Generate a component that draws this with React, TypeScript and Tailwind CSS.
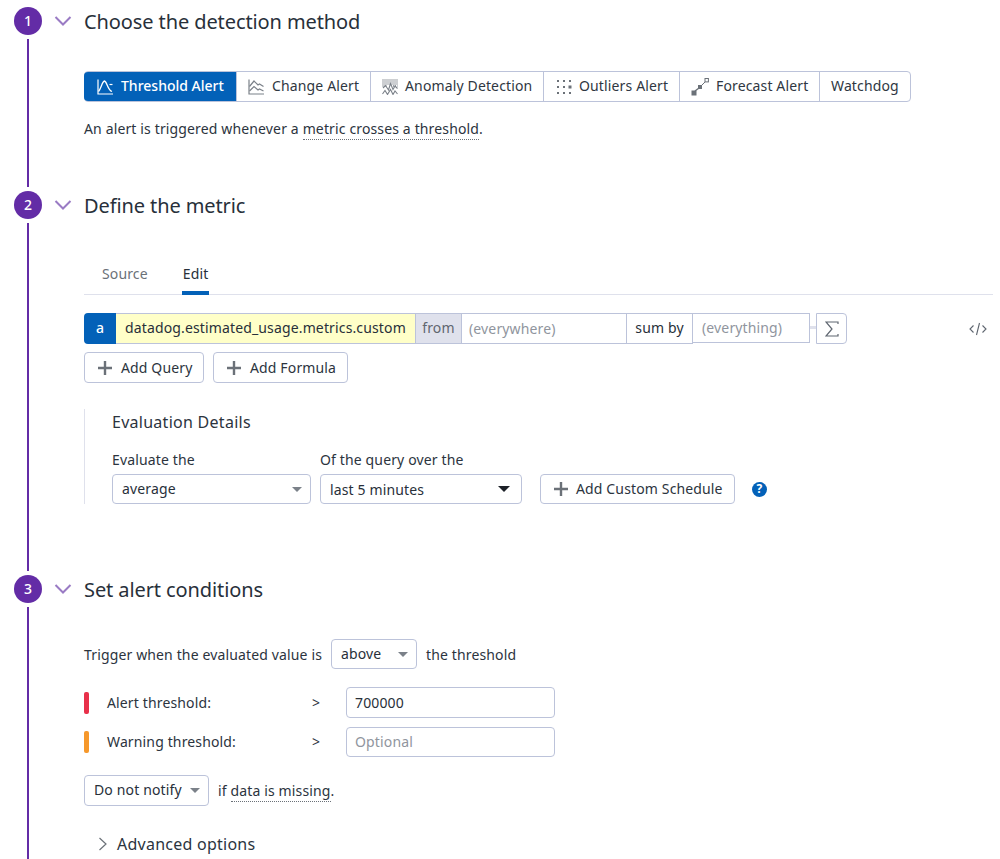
import React from "react";

const F = "font-['Noto_Sans',sans-serif]";

function Chevron() {
  return (
    <svg width="18" height="10" viewBox="0 0 18 10" className="shrink-0">
      <path d="M1.5 1 L9 8.5 L16.5 1" fill="none" stroke="#9a7bc4" strokeWidth="2" />
    </svg>
  );
}

function Caret({ color = "#7b8189", w = 10, h = 5 }: { color?: string; w?: number; h?: number }) {
  return (
    <svg width={w} height={h} viewBox="0 0 12 6" preserveAspectRatio="none" className="shrink-0">
      <path d="M0 0 H12 L6 6 Z" fill={color} />
    </svg>
  );
}

function Plus() {
  return (
    <svg width="16" height="16" viewBox="0 0 16 16" className="shrink-0">
      <path d="M8 1 V15 M1 8 H15" stroke="#6b7178" strokeWidth="2.4" fill="none" />
    </svg>
  );
}

function ThresholdIcon({ c }: { c: string }) {
  return (
    <svg width="16" height="16" viewBox="0 0 16 16" className="shrink-0">
      <path d="M1 0.5 V15 H16" stroke={c} strokeWidth="1.2" fill="none" />
      <path d="M1.5 12.5 C4 10 5 2.5 7.5 2 C10 2.5 10.5 11 15 12.5" stroke={c} strokeWidth="1.3" fill="none" />
      <path d="M12.5 5.5 H15.5" stroke={c} strokeWidth="1.2" fill="none" />
    </svg>
  );
}

function ChangeIcon({ c }: { c: string }) {
  return (
    <svg width="16" height="16" viewBox="0 0 16 16" className="shrink-0">
      <path d="M1 0.5 V15 H16" stroke={c} strokeWidth="1.2" fill="none" />
      <path d="M1.5 7.5 L6 2 L10 6 L11.5 5 L15.5 7.5" stroke={c} strokeWidth="1.2" fill="none" />
      <path d="M1.5 12 L6 7.5 L10 11 L11.5 10 L15.5 12" stroke={c} strokeWidth="1.2" fill="none" />
    </svg>
  );
}

function AnomalyIcon({ c }: { c: string }) {
  return (
    <svg width="16" height="16" viewBox="0 0 16 16" className="shrink-0">
      <path d="M0.5 1 H15.5 M0.5 3 H15.5 M0.5 5 H15.5 M0.5 7 H5 M11 7 H15.5" stroke={c} strokeWidth="1.3" strokeDasharray="1 1" fill="none" />
      <path d="M1 9 L3.5 6.5 L6.5 11 L8.5 4.5 L11 10.5 L13 7 L15.5 9.5" stroke={c} strokeWidth="1.1" fill="none" />
      <path d="M0.5 15 L3 11.5 L5.5 15.5 L8.5 10.5 L11 15.5 L13 12 L15.5 15" stroke={c} strokeWidth="1.1" fill="none" />
    </svg>
  );
}

function OutliersIcon({ c }: { c: string }) {
  const cells = [
    [1, 1],
    [7, 1],
    [13, 1],
    [1, 7],
    [7, 7],
    [1, 13],
    [7, 13],
    [13, 13],
  ];
  return (
    <svg width="16" height="16" viewBox="0 0 16 16" className="shrink-0">
      {cells.map(([x, y]) => (
        <rect key={`${x}-${y}`} x={x} y={y} width="2" height="2" fill={c} />
      ))}
      <rect x="12.5" y="6.5" width="3" height="3" fill={c} />
    </svg>
  );
}

function ForecastIcon({ c }: { c: string }) {
  return (
    <svg width="18" height="18" viewBox="0 0 18 18" className="shrink-0">
      <rect x="0.5" y="12.5" width="5" height="5" fill={c} />
      <rect x="7" y="7" width="4" height="4" fill={c} />
      <path d="M4 13 L8 10" stroke={c} strokeWidth="1.4" />
      <path d="M10 8 L14 4" stroke={c} strokeWidth="1" />
      <rect x="14" y="0.5" width="3.4" height="3.4" fill="none" stroke={c} strokeWidth="1" />
    </svg>
  );
}

function Step({
  n,
  title,
  last,
  heightClass,
  children,
}: {
  n: number;
  title: string;
  last?: boolean;
  heightClass: string;
  children: React.ReactNode;
}) {
  return (
    <section className={`flex ${heightClass}`}>
      <div className={`flex w-[28px] shrink-0 flex-col items-center ${last ? "" : "pb-[4px]"}`}>
        <div className="flex h-[28px] w-[28px] shrink-0 items-center justify-center rounded-full bg-[#632ca6] pb-[1px] text-[14px] font-medium text-white">
          {n}
        </div>
        <div className="mt-[4px] w-[2px] flex-1 bg-[#632ca6]" />
      </div>
      <div className="min-w-0 flex-1">
        <div className="flex h-[28px] items-center">
          <div className="ml-[12px] w-[30px]">
            <Chevron />
          </div>
          <h2 className="pt-[2px] text-[20px] leading-[28px] font-normal tracking-[-0.1px] text-[#28303a]">{title}</h2>
        </div>
        {children}
      </div>
    </section>
  );
}

function ModeButton({
  active,
  icon,
  label,
  className = "",
}: {
  active?: boolean;
  icon?: React.ReactNode;
  label: string;
  className?: string;
}) {
  return (
    <div
      className={`flex h-full items-center ${
        active
          ? "rounded-l-[4px] bg-[#0361b8] font-medium tracking-normal text-white"
          : "border-l border-[#bcc3da] text-[#2f3742]"
      } ${className}`}
    >
      {icon}
      <span className="pb-[2px]">{label}</span>
    </div>
  );
}

function Select({
  label,
  className = "",
  caret,
  textClass = "",
  dark,
}: {
  label: string;
  className?: string;
  caret?: string;
  textClass?: string;
  dark?: boolean;
}) {
  return (
    <div
      className={`flex items-center justify-between rounded-[4px] border border-[#bcc3da] bg-white text-[14px] text-[#28303a] ${className}`}
    >
      <span className={textClass}>{label}</span>
      {dark ? <Caret color="#1c2128" w={12} h={6} /> : <Caret color={caret} />}
    </div>
  );
}

export default function App() {
  return (
    <div className={`${F} h-[859px] overflow-hidden bg-white pt-[7px] pr-[7px] pl-[14px] text-[14px] tracking-[0.14px] text-[#2c343e]`}>
      <Step n={1} title="Choose the detection method" heightClass="h-[184px]">
        <div className="mt-[36px] ml-[42px] flex h-[31px] w-[827px] items-center rounded-[4px] border border-[#bcc3da] text-[14px]">
          <ModeButton active className="-my-px -ml-px h-[31px] w-[152px] shrink-0 gap-[8px] pl-[13px]" icon={<ThresholdIcon c="#ffffff" />} label="Threshold Alert" />
          <ModeButton className="w-[134px] gap-[8px] pl-[11px]" icon={<ChangeIcon c="#7b8189" />} label="Change Alert" />
          <ModeButton className="w-[173px] gap-[7px] pl-[11px]" icon={<AnomalyIcon c="#7b8189" />} label="Anomaly Detection" />
          <ModeButton className="w-[136px] gap-[7px] pl-[12px]" icon={<OutliersIcon c="#6b7178" />} label="Outliers Alert" />
          <ModeButton className="w-[140px] gap-[7px] pl-[11px]" icon={<ForecastIcon c="#6b7178" />} label="Forecast Alert" />
          <ModeButton className="flex-1 pl-[11px]" label="Watchdog" />
        </div>
        <p className="mt-[17px] ml-[42px] leading-[20px]">
          An alert is triggered whenever a{" "}
          <span className="border-b border-dotted border-[#6b7178] pb-[1px]">metric crosses a threshold</span>.
        </p>
      </Step>

      <Step n={2} title="Define the metric" heightClass="h-[384px]">
        <div className="mt-[27px] ml-[42px] flex h-[49px] gap-[34px] border-b border-[#dfe1ec] pl-[18px]">
          <div className="pt-[18px] leading-[20px] text-[#6b7178]">Source</div>
          <div className="h-[49px] w-[27px] border-b-[4px] border-[#0361b8] pt-[18px] pl-[1px] leading-[20px] text-[#28303a]">
            Edit
          </div>
        </div>

        <div className="mt-[18px] ml-[42px] flex h-[31px] items-start">
          <div className="flex h-[31px] w-[32px] items-center justify-center rounded-l-[4px] bg-[#0361b8] pb-[2px] font-medium text-white">
            a
          </div>
          <div className="flex h-[31px] w-[300px] items-center border-y border-r border-[#bcc3da] bg-[#ffffc8] pb-[2px] pl-[9px] text-[#28303a]">
            datadog.estimated_usage.metrics.custom
          </div>
          <div className="flex h-[31px] w-[46px] items-center justify-center border-y border-r border-[#bcc3da] bg-[#dfe1ec] pb-[2px] text-[#5f6670]">
            from
          </div>
          <div className="flex h-[31px] w-[164px] items-center border-y border-[#bcc3da] pl-[7px] text-[#90959e]">
            (everywhere)
          </div>
          <div className="flex h-[31px] w-[67px] items-center justify-center border border-[#bcc3da] pb-[2px] text-[#28303a]">
            sum by
          </div>
          <div className="flex h-[30px] w-[117px] items-center border-y border-r border-[#bcc3da] pb-[1px] pl-[9px] text-[#90959e]">
            (everything)
          </div>
          <div className="mt-[13px] h-[3px] w-[6px] bg-[#dfe1ec]" />
          <div className="flex h-[31px] w-[31px] items-center justify-center rounded-r-[4px] border border-[#bcc3da]">
            <svg width="14" height="16" viewBox="0 0 14 16">
              <path d="M13 3 V1 H1 L7 8 L1 15 H13 V13" fill="none" stroke="#5f6670" strokeWidth="1.2" />
            </svg>
          </div>
          <div className="ml-auto flex h-[31px] items-center pr-[6px]">
            <svg width="18" height="14" viewBox="0 0 18 14">
              <path d="M4.5 3.5 L1 7 L4.5 10.5 M13.5 3.5 L17 7 L13.5 10.5 M10.5 1 L7.5 13" fill="none" stroke="#5f6670" strokeWidth="1.1" />
            </svg>
          </div>
        </div>

        <div className="mt-[8px] ml-[42px] flex gap-[9px]">
          <div className="flex h-[31px] w-[120px] items-center gap-[8px] rounded-[4px] border border-[#bcc3da] pl-[12px]">
            <Plus />
            <span>Add Query</span>
          </div>
          <div className="flex h-[31px] w-[135px] items-center gap-[8px] rounded-[4px] border border-[#bcc3da] pl-[12px]">
            <Plus />
            <span>Add Formula</span>
          </div>
        </div>

        <div className="mt-[26px] ml-[42px] h-[95px] border-l border-[#dfe1ec] pl-[27px]">
          <div className="text-[16px] leading-[26px] tracking-[0.27px] text-[#2c343e]">Evaluation Details</div>
          <div className="mt-[15px] flex items-start">
            <div className="mr-[9px] w-[199px]">
              <div className="leading-[20px]">Evaluate the</div>
              <Select label="average" caret="#7b8189" textClass="pb-[1px]" className="mt-[4px] h-[30px] w-[199px] pr-[8px] pl-[9px]" />
            </div>
            <div className="mr-[18px] w-[202px]">
              <div className="leading-[20px]">Of the query over the</div>
              <Select label="last 5 minutes" dark className="mt-[4px] h-[30px] w-[202px] pr-[11px] pl-[9px]" />
            </div>
            <div className="mt-[24px] flex h-[30px] w-[195px] items-center gap-[7px] rounded-[4px] border border-[#bcc3da] pl-[12px]">
              <Plus />
              <span className="pb-[2px]">Add Custom Schedule</span>
            </div>
            <div className="mt-[24px] ml-[17px] flex h-[30px] items-center">
              <div className="flex h-[15px] w-[15px] items-center justify-center rounded-full bg-[#0361b8] text-[12px] leading-none font-bold text-white">
                ?
              </div>
            </div>
          </div>
        </div>
      </Step>

      <Step n={3} title="Set alert conditions" last heightClass="h-[300px]">
        <div className="mt-[36px] ml-[42px] flex h-[30px] items-center">
          <span>Trigger when the evaluated value is</span>
          <Select label="above" caret="#7b8189" textClass="pb-[2px]" className="mr-[9px] ml-[9px] h-[30px] w-[86px] pr-[8px] pl-[9px]" />
          <span>the threshold</span>
        </div>

        <div className="mt-[18px] ml-[42px] flex h-[31px] items-center">
          <div className="h-[22px] w-[5px] rounded-[2px] bg-[#e8304a]" />
          <div className="ml-[18px] w-[205px]">Alert threshold:</div>
          <div className="w-[34px]">&gt;</div>
          <div className="flex h-[31px] w-[209px] items-center rounded-[4px] border border-[#bcc3da] pl-[8px] text-[#28303a]">
            700000
          </div>
        </div>
        <div className="mt-[9px] ml-[42px] flex h-[30px] items-center">
          <div className="h-[22px] w-[5px] rounded-[2px] bg-[#f6982b]" />
          <div className="ml-[18px] w-[205px] pb-[2px]">Warning threshold:</div>
          <div className="w-[34px] pb-[2px]">&gt;</div>
          <div className="flex h-[30px] w-[209px] items-center rounded-[4px] border border-[#bcc3da] pb-[2px] pl-[8px] text-[#90959e]">
            Optional
          </div>
        </div>

        <div className="mt-[18px] ml-[42px] flex h-[31px] items-center">
          <Select label="Do not notify" caret="#7b8189" textClass="pb-[2px]" className="h-[31px] w-[125px] pr-[8px] pl-[9px]" />
          <span className="ml-[9px]">
            if <span className="border-b border-dotted border-[#6b7178] pb-[1px]">data is missing</span>.
          </span>
        </div>

        <div className="mt-[24px] ml-[56px] flex h-[28px] items-center">
          <svg width="10" height="14" viewBox="0 0 10 14" className="shrink-0">
            <path d="M1.5 1 L8 7 L1.5 13" fill="none" stroke="#6b7178" strokeWidth="1.2" />
          </svg>
          <span className="ml-[9px] text-[16px] tracking-[0.25px] text-[#2c343e]">Advanced options</span>
        </div>
      </Step>
    </div>
  );
}
